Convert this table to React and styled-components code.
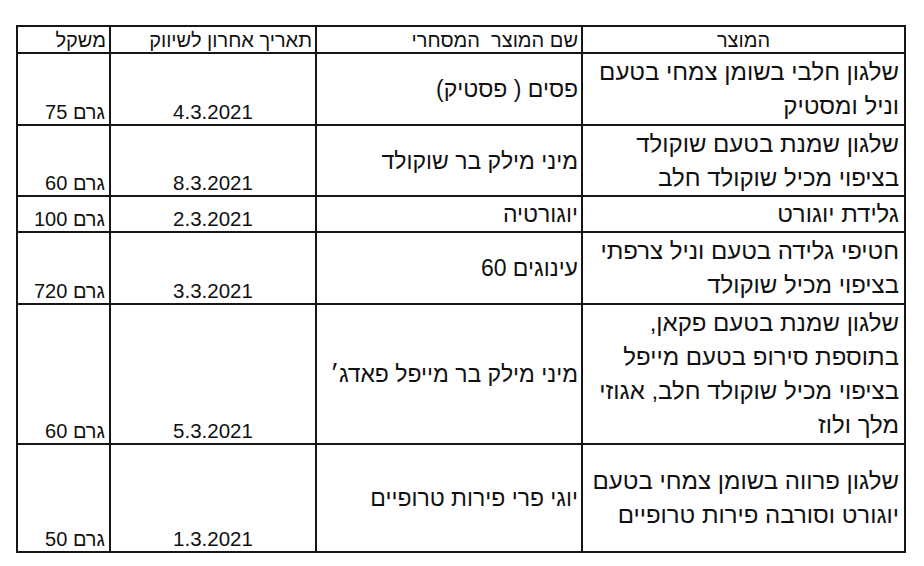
import React from "react"
import styled, { createGlobalStyle } from "styled-components"

const rows = [
  {
    product: ["שלגון חלבי בשומן צמחי בטעם", "וניל ומסטיק"],
    name: "פסים ( פסטיק)",
    date: "4.3.2021",
    weight: "גרם 75",
    height: 72,
  },
  {
    product: ["שלגון שמנת בטעם שוקולד", "בציפוי מכיל שוקולד חלב"],
    name: "מיני מילק בר שוקולד",
    date: "8.3.2021",
    weight: "גרם 60",
    height: 71,
  },
  {
    product: ["גלידת יוגורט"],
    name: "יוגורטיה",
    date: "2.3.2021",
    weight: "גרם 100",
    height: 36,
  },
  {
    product: ["חטיפי גלידה בטעם וניל צרפתי", "בציפוי מכיל שוקולד"],
    name: "עינוגים 60",
    date: "3.3.2021",
    weight: "גרם 720",
    height: 72,
  },
  {
    product: [
      "שלגון שמנת בטעם פקאן,",
      "בתוספת סירופ בטעם מייפל",
      "בציפוי מכיל שוקולד חלב, אגוזי",
      "מלך ולוז",
    ],
    name: "מיני מילק בר מייפל פאדג׳",
    date: "5.3.2021",
    weight: "גרם 60",
    height: 140,
  },
  {
    product: ["שלגון פרווה בשומן צמחי בטעם", "יוגורט וסורבה פירות טרופיים"],
    name: "יוגי פרי פירות טרופיים",
    date: "1.3.2021",
    weight: "גרם 50",
    height: 108,
  },
]

const App = () => {
  return (
    <>
      <GlobalStyle />
      <Page>
        <Table dir="rtl">
          <colgroup>
            <col style={{ width: 323 }} />
            <col style={{ width: 266 }} />
            <col style={{ width: 206 }} />
            <col style={{ width: 93 }} />
          </colgroup>
          <thead>
            <tr>
              <HeadCell $align="center">המוצר</HeadCell>
              <HeadCell>שם המוצר&nbsp; המסחרי</HeadCell>
              <HeadCell>תאריך אחרון לשיווק</HeadCell>
              <HeadCell>משקל</HeadCell>
            </tr>
          </thead>
          <tbody>
            {rows.map((row, i) => (
              <tr key={i} style={{ height: row.height }}>
                <ProductCell>
                  {row.product.map((line, j) => (
                    <Line key={j}>{line}</Line>
                  ))}
                </ProductCell>
                <NameCell>{row.name}</NameCell>
                <DateCell>{row.date}</DateCell>
                <WeightCell>{row.weight}</WeightCell>
              </tr>
            ))}
          </tbody>
        </Table>
      </Page>
    </>
  )
}

export default App

const GlobalStyle = createGlobalStyle`
  html, body {
    margin: 0;
    padding: 0;
    background: #fff;
  }
  body {
    font-family: "Liberation Sans", Arial, sans-serif;
    color: #111;
  }
`

const Page = styled.div`
  width: 924px;
  height: 566px;
  padding: 25px 0 0 16px;
  box-sizing: border-box;
`

const Table = styled.table`
  width: 888px;
  border-collapse: collapse;
  table-layout: fixed;
  border: 2px solid #161616;
  font-family: "Liberation Sans", Arial, sans-serif;
  color: #111;

  td, th {
    border: 2px solid #161616;
    padding: 0;
    box-sizing: border-box;
  }
`

const HeadCell = styled.th`
  height: 27px;
  font-weight: normal;
  font-size: 20px;
  line-height: 24px;
  text-align: ${(p) => p.$align || "right"};
  padding: 0 3px !important;
  white-space: nowrap;
`

const ProductCell = styled.td`
  font-size: 24px;
  line-height: 34px;
  text-align: right;
  vertical-align: middle;
  padding: 0 5px 0 0 !important;
`

const Line = styled.div`
  white-space: nowrap;
`

const NameCell = styled.td`
  font-size: 23px;
  line-height: 30px;
  text-align: right;
  vertical-align: middle;
  padding: 0 3px !important;
  white-space: nowrap;
`

const DateCell = styled.td`
  font-size: 20.5px;
  line-height: 24px;
  text-align: center;
  vertical-align: bottom;
  white-space: nowrap;
`

const WeightCell = styled.td`
  font-size: 20px;
  line-height: 24px;
  text-align: right;
  vertical-align: bottom;
  padding: 0 4px !important;
  white-space: nowrap;
`
